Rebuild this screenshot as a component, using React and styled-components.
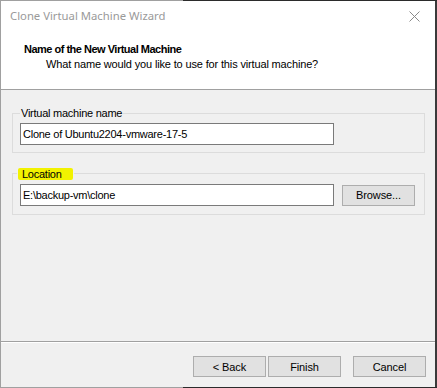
import React from "react";
import styled, { createGlobalStyle } from "styled-components";

const Global = createGlobalStyle`
  html, body { margin: 0; padding: 0; background: #2b2b2b; }
  #root { width: 437px; height: 388px; }
`;

const Frame = styled.div`
  width: 437px;
  height: 388px;
  box-sizing: border-box;
  padding: 1px 0;
  background: linear-gradient(to right, #a0a0a0 0, #a0a0a0 183px, #2b2b2b 183px);
  display: flex;
`;

const Window = styled.div`
  flex: 1;
  box-sizing: border-box;
  border-left: 1px solid #a0a0a0;
  border-right: 2px solid #3a3a3a;
  background: #f0f0f0;
  display: flex;
  flex-direction: column;
  font-family: "Liberation Sans", Arial, sans-serif;
  font-size: 11px;
  letter-spacing: -0.25px;
  color: #000;
`;

const Top = styled.div`
  background: #fff;
  height: 88px;
  border-bottom: 1px solid #a0a0a0;
  display: flex;
  flex-direction: column;
`;

const TitleBar = styled.div`
  height: 30px;
  display: flex;
  align-items: center;
  justify-content: space-between;
  padding: 0 0 0 9px;
`;

const TitleText = styled.span`
  font-family: "Noto Sans", "Open Sans", sans-serif;
  font-size: 11.3px;
  letter-spacing: 0;
  color: #9a9a9a;
  padding-bottom: 1px;
`;

const CloseBox = styled.div`
  width: 44px;
  height: 30px;
  display: flex;
  align-items: center;
  justify-content: center;
  margin-right: -1px;
`;

const Header = styled.div`
  padding: 11px 0 0 23px;
  display: flex;
  flex-direction: column;
  gap: 1px;
`;

const HeaderTitle = styled.div`
  font-weight: bold;
  font-size: 11px;
  line-height: 14px;
  letter-spacing: -0.5px;
`;

const HeaderSub = styled.div`
  padding-left: 22px;
  font-size: 11px;
  line-height: 14px;
  letter-spacing: -0.15px;
`;

const Body = styled.div`
  flex: 1;
  display: flex;
  flex-direction: column;
  padding: 17px 10px 0 11px;
  gap: 14px;
`;

const Group = styled.fieldset`
  margin: 0;
  border: 1px solid #dcdcdc;
  padding: ${(p) => p.$pt}px 0 ${(p) => p.$pb}px 7px;
  min-width: 0;
`;

const Legend = styled.legend`
  margin-left: ${(p) => p.$ml}px;
  padding: 0 1px;
  font-size: 11px;
  line-height: 13px;
  height: 13px;
`;

const Mark = styled.span`
  display: inline-block;
  vertical-align: top;
  margin-top: 1px;
  background: #f2f200;
  padding: 0 11px 0 4px;
  height: 12px;
  line-height: 12px;
  border-radius: 2px;
`;

const Row = styled.div`
  display: flex;
  align-items: center;
  gap: 8px;
`;

const Input = styled.div`
  width: 314px;
  height: 22px;
  box-sizing: border-box;
  border: 1px solid #7a7a7a;
  background: #fff;
  display: flex;
  align-items: center;
  padding-left: 2px;
  font-size: 11px;
`;

const Button = styled.button`
  width: 73px;
  height: 21px;
  box-sizing: border-box;
  border: 1px solid #adadad;
  background: #e1e1e1;
  padding: 0;
  margin: 0;
  font-family: "Liberation Sans", Arial, sans-serif;
  font-size: 11px;
  letter-spacing: -0.1px;
  color: #000;
  display: flex;
  align-items: center;
  justify-content: center;
`;

const Footer = styled.div`
  border-top: 1px solid #a0a0a0;
  box-shadow: inset 0 1px 0 #ffffff;
  height: 46px;
  display: flex;
  justify-content: flex-end;
  align-items: flex-start;
  padding: 14px 9px 0 0;
  box-sizing: border-box;
`;

const ButtonPair = styled.div`
  display: flex;
  gap: 2px;
  margin-right: 12px;
`;

export default function App() {
  return (
    <>
      <Global />
      <Frame>
        <Window>
          <Top>
            <TitleBar>
              <TitleText>Clone Virtual Machine Wizard</TitleText>
              <CloseBox>
                <svg width="11" height="11" viewBox="0 0 11 11">
                  <path d="M0.5 0.5 L10.5 10.5 M10.5 0.5 L0.5 10.5" stroke="#8a8a8a" strokeWidth="1" fill="none" />
                </svg>
              </CloseBox>
            </TitleBar>
            <Header>
              <HeaderTitle>Name of the New Virtual Machine</HeaderTitle>
              <HeaderSub>What name would you like to use for this virtual machine?</HeaderSub>
            </Header>
          </Top>
          <Body>
            <Group $pt={3} $pb={7}>
              <Legend $ml={0}>Virtual machine name</Legend>
              <Input>Clone of Ubuntu2204-vmware-17-5</Input>
            </Group>
            <Group $pt={4} $pb={8}>
              <Legend $ml={-3}>
                <Mark>Location</Mark>
              </Legend>
              <Row>
                <Input>E:\backup-vm\clone</Input>
                <Button>Browse...</Button>
              </Row>
            </Group>
          </Body>
          <Footer>
            <ButtonPair>
              <Button>&lt; Back</Button>
              <Button>Finish</Button>
            </ButtonPair>
            <Button>Cancel</Button>
          </Footer>
        </Window>
      </Frame>
    </>
  );
}
